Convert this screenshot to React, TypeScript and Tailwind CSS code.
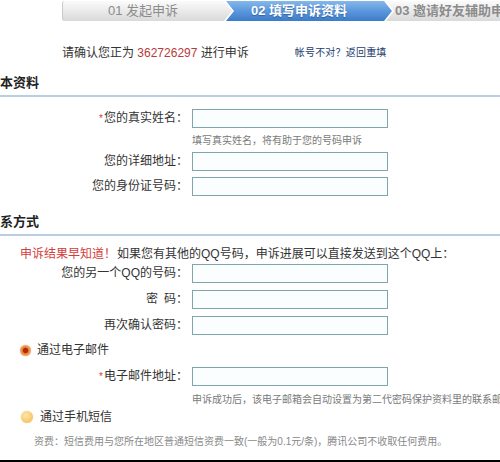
import React from "react";

const labelCls = "w-[188px] shrink-0 text-right text-[12px] leading-[19px] text-[#333]";
const inputCls = "w-[196px] h-[19px] border border-[#7fa6ab] bg-[#fbfefe] outline-none";

type FieldProps = { label: React.ReactNode; required?: boolean; className?: string };

const Field = ({ label, required, className }: FieldProps) => (
    <div className={"flex items-center gap-[4px] " + (className ?? "")}>
        <label className={labelCls}>
            {required && <span className="text-[#d43c3c] text-[10px] align-top mr-[1px]">*</span>}
            {label}：
        </label>
        <input className={inputCls} />
    </div>
);

const Steps = () => (
    <div className="flex h-[20px] mt-[1px] ml-[62px] text-[13px] leading-[20px] whitespace-nowrap">
        <div className="w-[170px] shrink-0 pl-[45px] rounded-l-[3px] border-l border-[#c9c9c9] bg-gradient-to-b from-[#fbfbfb] to-[#d9d9d9] text-[#8c8c8c] [clip-path:polygon(0_0,162px_0,170px_50%,162px_100%,0_100%)]">
            01 发起申诉
        </div>
        <div className="w-[166px] shrink-0 -ml-[6px] pl-[25px] bg-gradient-to-b from-[#86b8ea] via-[#5b97dc] to-[#3c7cc7] text-white font-bold [text-shadow:0_1px_1px_rgba(0,40,100,0.4)] [clip-path:polygon(0_0,158px_0,166px_50%,158px_100%,0_100%,8px_50%)]">
            02 填写申诉资料
        </div>
        <div className="w-[200px] shrink-0 -ml-[6px] pl-[9px] bg-gradient-to-b from-[#fbfbfb] to-[#d9d9d9] text-[#8c8c8c] font-bold [clip-path:polygon(0_0,100%_0,100%_100%,0_100%,8px_50%)]">
            03 邀请好友辅助申诉
        </div>
    </div>
);

const Heading = ({ children, className }: { children: React.ReactNode; className?: string }) => (
    <div className={"h-[22px] border-b-2 border-[#b8cfe2] " + (className ?? "")}>
        <div className="-ml-[13px] text-[13px] leading-[16px] font-bold text-[#222]">{children}</div>
    </div>
);

const Hint = ({ children, className }: { children: React.ReactNode; className?: string }) => (
    <div className={"pl-[192px] h-[14px] text-[10px] leading-[14px] text-[#7a7a7a] whitespace-nowrap " + (className ?? "")}>
        {children}
    </div>
);

export default function App() {
    return (
        <div className="w-[500px] h-[462px] overflow-hidden bg-white border-b-2 border-black font-['Liberation_Sans','Noto_Sans_CJK_SC',sans-serif]">
            <Steps />

            <div className="flex items-center mt-[24px] ml-[62px] h-[16px] text-[12px] leading-[16px] text-[#333] whitespace-nowrap">
                <span>
                    请确认您正为 <span className="text-[#b83a3a]">362726297</span> 进行申诉
                </span>
                <a className="ml-[46px] text-[10px] tracking-[0.2px] text-[#1d3c6e] cursor-pointer">帐号不对？返回重填</a>
            </div>

            <Heading className="mt-[14px]">基本资料</Heading>
            <Field required label="您的真实姓名" className="mt-[12px]" />
            <Hint className="mt-[6px]">填写真实姓名，将有助于您的号码申诉</Hint>
            <Field label="您的详细地址" className="mt-[4px]" />
            <Field label="您的身份证号码" className="mt-[6px]" />

            <Heading className="mt-[18px]">联系方式</Heading>
            <div className="mt-[10px] pl-[20px] h-[16px] text-[12px] leading-[16px] text-[#333] whitespace-nowrap">
                <span className="text-[#d43c3c]">申诉结果早知道！</span>
                <span className="ml-[1px]">如果您有其他的QQ号码，申诉进展可以直接发送到这个QQ上：</span>
            </div>
            <Field label="您的另一个QQ的号码" className="mt-[2px]" />
            <Field
                label={
                    <>
                        <span className="mr-[6px]">密</span>码
                    </>
                }
                className="mt-[7px]"
            />
            <Field label="再次确认密码" className="mt-[7px]" />

            {/* 通知方式 */}
            <label className="flex items-center mt-[7px] pl-[20px] h-[16px] text-[12px] leading-[16px] text-[#333]">
                <span className="w-[11px] h-[11px] rounded-full bg-[radial-gradient(circle,#b02c00_0%,#b02c00_28%,#e9873e_42%,#f8c690_100%)] shadow-[0_0_1px_#e0a060]" />
                <span className="ml-[6px]">通过电子邮件</span>
            </label>
            <Field required label="电子邮件地址" className="mt-[9px]" />
            <Hint className="mt-[7px]">申诉成功后，该电子邮箱会自动设置为第二代密码保护资料里的联系邮箱</Hint>
            <label className="flex items-center mt-[2px] pl-[21px] h-[16px] text-[12px] leading-[16px] text-[#333]">
                <span className="w-[12px] h-[12px] rounded-full bg-[radial-gradient(circle_at_40%_35%,#fde7ad,#f3b746)] shadow-[0_0_1px_#e0b060]" />
                <span className="ml-[7px]">通过手机短信</span>
            </label>
            <div className="mt-[10px] pl-[34px] h-[14px] text-[10px] leading-[14px] text-[#888] whitespace-nowrap">
                资费：短信费用与您所在地区普通短信资费一致(一般为0.1元/条)，腾讯公司不收取任何费用。
            </div>
        </div>
    );
}
